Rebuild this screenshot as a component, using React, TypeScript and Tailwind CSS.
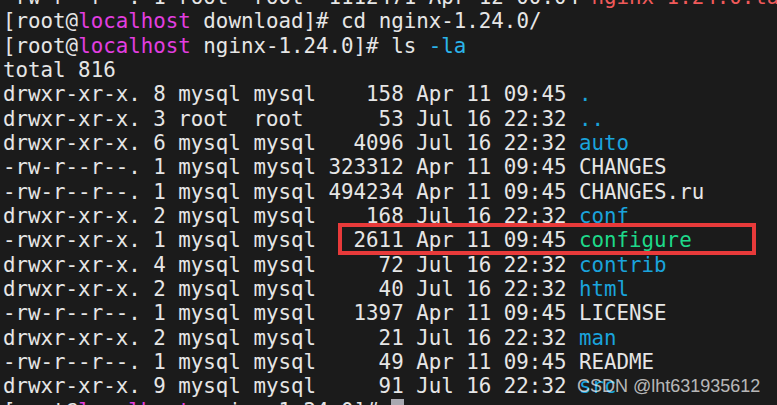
const rows: [string, string, string][] = [
  ["drwxr-xr-x. 8 mysql mysql    158 Apr 11 09:45 ", ".", "dir"],
  ["drwxr-xr-x. 3 root  root      53 Jul 16 22:32 ", "..", "dir"],
  ["drwxr-xr-x. 6 mysql mysql   4096 Jul 16 22:32 ", "auto", "dir"],
  ["-rw-r--r--. 1 mysql mysql 323312 Apr 11 09:45 ", "CHANGES", "file"],
  ["-rw-r--r--. 1 mysql mysql 494234 Apr 11 09:45 ", "CHANGES.ru", "file"],
  ["drwxr-xr-x. 2 mysql mysql    168 Jul 16 22:32 ", "conf", "dir"],
  ["-rwxr-xr-x. 1 mysql mysql   2611 Apr 11 09:45 ", "configure", "exec"],
  ["drwxr-xr-x. 4 mysql mysql     72 Jul 16 22:32 ", "contrib", "dir"],
  ["drwxr-xr-x. 2 mysql mysql     40 Jul 16 22:32 ", "html", "dir"],
  ["-rw-r--r--. 1 mysql mysql   1397 Apr 11 09:45 ", "LICENSE", "file"],
  ["drwxr-xr-x. 2 mysql mysql     21 Jul 16 22:32 ", "man", "dir"],
  ["-rw-r--r--. 1 mysql mysql     49 Apr 11 09:45 ", "README", "file"],
  ["drwxr-xr-x. 9 mysql mysql     91 Jul 16 22:32 ", "src", "dir"],
];

const nameColor = (kind: string) => {
  if (kind === "dir") return "text-[#1aa3dc]";
  if (kind === "exec") return "text-[#1ed98a]";
  return "";
};

const Prompt = ({ dir }: { dir: string }) => (
  <>
    [root@<span className="text-[#e23ee0]">localhost</span> {dir}]#{" "}
  </>
);

export default function App() {
  return (
    <div className="relative h-[405px] w-full overflow-hidden bg-[#1b1b1b] text-[#e6e6e6]">
      <div className="mt-[-15px] pl-[3px] whitespace-pre font-['DejaVu_Sans_Mono',monospace] text-[20.8px] leading-[24.33px]">
        <div>
          -rw-r--r--. 1 root  root  1112471 Apr 12 00:04{" "}
          <span className="text-[#f05a5a]">nginx-1.24.0.tar.gz</span>
        </div>
        <div>
          <Prompt dir="download" />
          cd nginx-1.24.0/
        </div>
        <div>
          <Prompt dir="nginx-1.24.0" />
          ls <span className="text-[#2bb4ea]">-la</span>
        </div>
        <div>total 816</div>
        {rows.map(([meta, name, kind]) => (
          <div key={name}>
            {meta}
            <span className={nameColor(kind)}>{name}</span>
          </div>
        ))}
        <div>
          <Prompt dir="nginx-1.24.0" />
          <span className="bg-[#a8a8b0]"> </span>
        </div>
      </div>

      {/* highlight box */}
      <div className="absolute left-[338px] top-[223px] h-[32px] w-[418px] border-4 border-[#e83a3a]" />

      {/* watermark */}
      <div className="absolute left-[577px] top-[377px] font-['Liberation_Sans',sans-serif] text-[18px] leading-[18px] text-white/70">
        CSDN @lht631935612
      </div>
    </div>
  );
}
